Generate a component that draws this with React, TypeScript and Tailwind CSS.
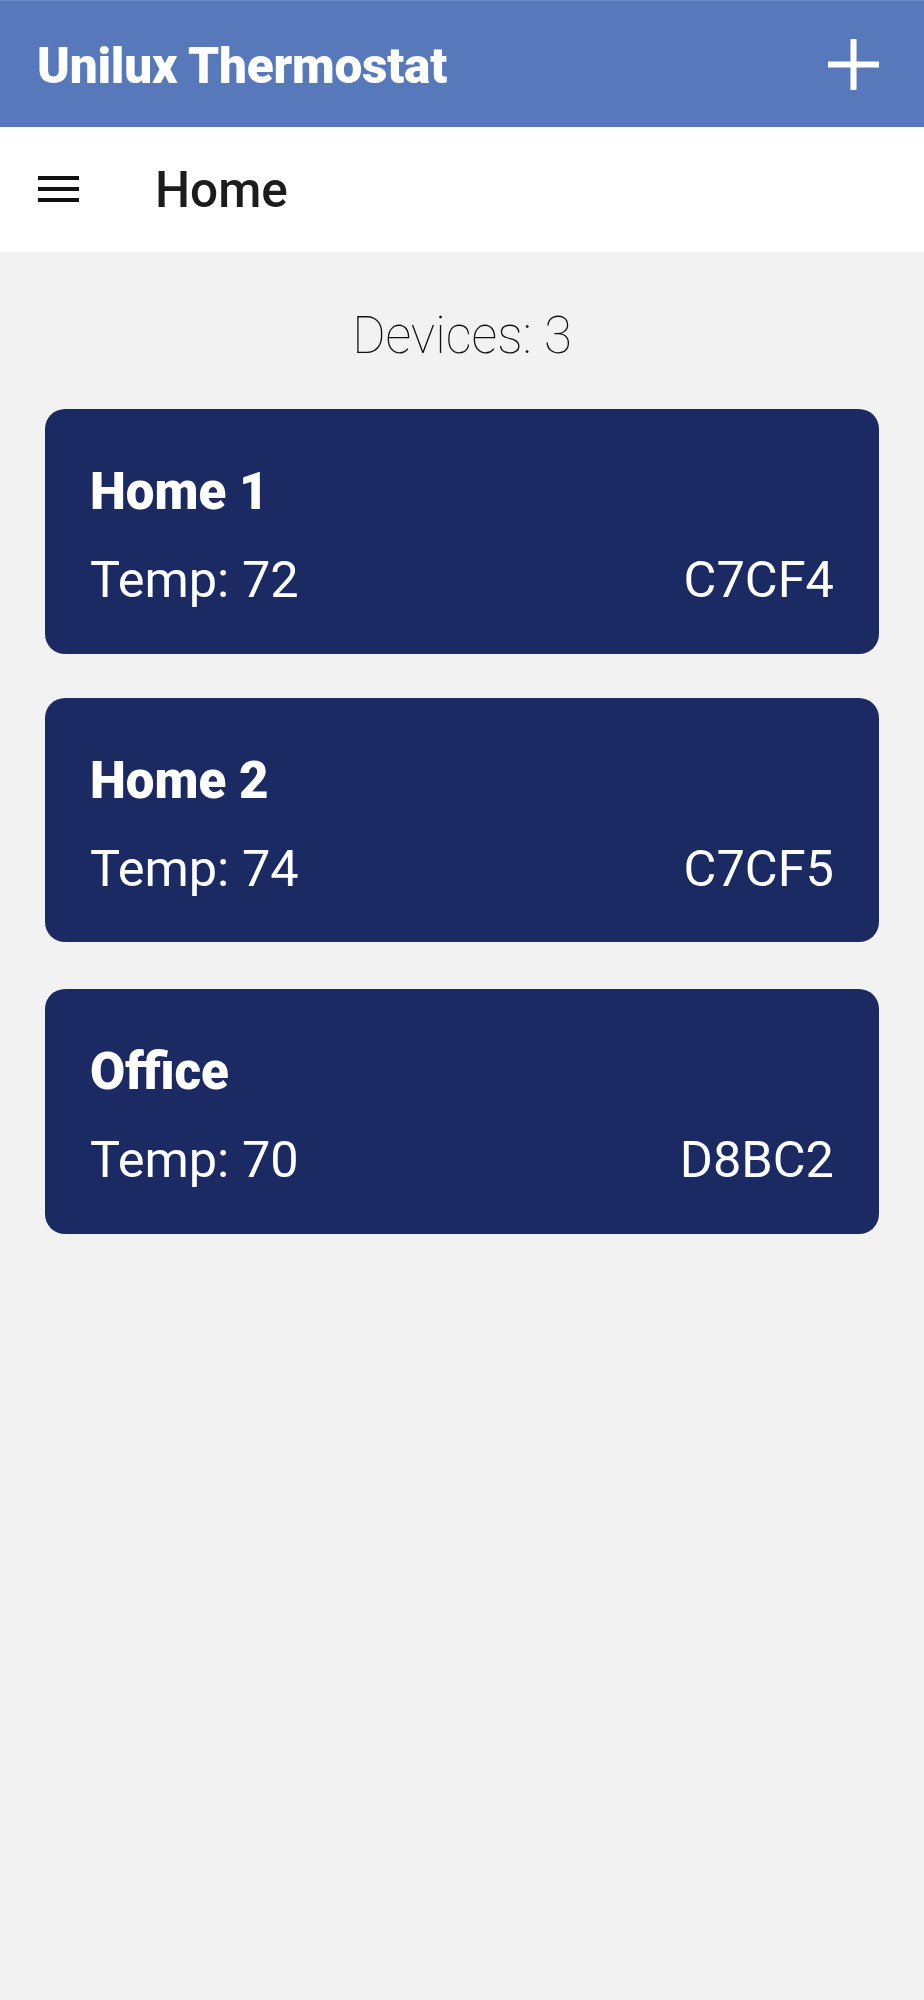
import React from "react";

const devices = [
  { name: "Home 1", temp: 72, id: "C7CF4", mt: "mt-[48px]" },
  { name: "Home 2", temp: 74, id: "C7CF5", mt: "mt-[44px]" },
  { name: "Office", temp: 70, id: "D8BC2", mt: "mt-[47px]" },
];

export default function App() {
  return (
    <div
      className="min-h-[2000px] w-[924px] bg-[#f2f2f2]"
      style={{ fontFamily: "Roboto, 'Noto Sans', sans-serif" }}
    >
      <header className="flex h-[127px] items-center justify-between bg-[#5779bb] pl-[37px] pr-[45px] pt-[6px] border-t border-[#6a88c4]">
        <h1 className="text-[49.5px] font-black leading-none text-white tracking-[-0.2px]">
          Unilux Thermostat
        </h1>
        <svg width="51" height="51" viewBox="0 0 51 51" className="-mt-[6px]">
          <rect x="22.5" y="0" width="6" height="51" fill="white" />
          <rect x="0" y="22.5" width="51" height="6" fill="white" />
        </svg>
      </header>
      <div className="flex h-[125px] items-center bg-white pl-[38px] pt-[2px]">
        <div className="flex w-[41px] flex-col gap-[7px] -mt-[3px]">
          <div className="h-[4px] bg-[#111]" />
          <div className="h-[4px] bg-[#111]" />
          <div className="h-[4px] bg-[#111]" />
        </div>
        <div className="ml-[76px] text-[49.5px] font-medium leading-none text-[#1c1c1c]">
          Home
        </div>
      </div>
      <div className="mt-[58px] text-center text-[51px] font-thin leading-none text-[#111]">
        Devices: 3
      </div>
      <div className="flex flex-col px-[45px]">
        {devices.map((d) => (
          <div
            key={d.id}
            className={`${d.mt} rounded-[20px] bg-[#1b2a63] px-[45px] pt-[57px] pb-[48px] text-white`}
          >
            <div className="text-[51px] font-black leading-none">{d.name}</div>
            <div className="mt-[38px] flex justify-between text-[50.5px] leading-none">
              <span>Temp: {d.temp}</span>
              <span>{d.id}</span>
            </div>
          </div>
        ))}
      </div>
    </div>
  );
}
